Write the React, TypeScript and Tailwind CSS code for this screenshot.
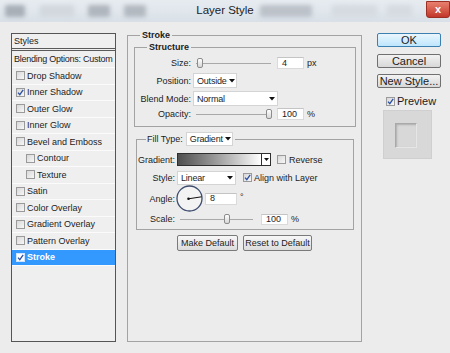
import clsx from 'clsx'

function Check({ checked, className }: { checked?: boolean; className?: string }) {
  return (
    <span
      className={clsx(
        'flex h-[9px] w-[9px] shrink-0 items-center justify-center border border-[#9a9a9a] bg-gradient-to-br from-[#d8d8d8] to-[#f7f7f7]',
        className
      )}
    >
      {checked && (
        <svg width="7" height="7" viewBox="0 0 7 7">
          <path d="M1 3.6 L2.8 5.6 L6.2 0.8" fill="none" stroke="#2b4fa3" strokeWidth="1.3" />
        </svg>
      )}
    </span>
  )
}

function Arrow() {
  return (
    <svg width="6" height="4" viewBox="0 0 6 4" className="shrink-0">
      <path d="M0 0 H6 L3 3.5 Z" fill="#111" />
    </svg>
  )
}

function Select({ value, className }: { value: string; className: string }) {
  return (
    <div
      className={clsx(
        'flex items-center justify-between gap-[2px] border border-[#d4d4d4] bg-white pl-[3px] pr-[2px]',
        className
      )}
    >
      <span className="whitespace-nowrap tracking-[-0.2px]">{value}</span>
      <Arrow />
    </div>
  )
}

function Field({ value, className }: { value: string; className: string }) {
  return (
    <div
      className={clsx(
        'flex items-center border border-[#dadada] border-t-[#c4c4c4] bg-white pl-[4px] leading-none',
        className
      )}
    >
      {value}
    </div>
  )
}

function Slider({ className, thumb }: { className: string; thumb: string }) {
  return (
    <div className={clsx('relative h-[12px]', className)}>
      <div className="absolute left-[3px] right-[2px] top-[6px] h-[2px] border-t border-[#a9a9a9] border-b-white" />
      <div
        className={clsx(
          'absolute top-[1px] h-[10px] w-[6px] rounded-[2px] border border-[#8c8c8c] bg-gradient-to-b from-white to-[#d6d6d6]',
          thumb
        )}
      />
    </div>
  )
}

function StyleRow({
  label,
  checked,
  indent,
  selected,
}: {
  label: string
  checked?: boolean
  indent?: boolean
  selected?: boolean
}) {
  return (
    <div
      className={clsx(
        'flex h-[16.5px] items-center border-b border-[#fbfbfb]',
        indent ? 'pl-[14px]' : 'pl-[4px]',
        selected && 'bg-[#3399ff] font-bold text-white'
      )}
    >
      <Check checked={checked} className={selected ? 'border-[#cfe4ff] from-white to-white' : ''} />
      <span className="ml-[2px]">{label}</span>
    </div>
  )
}

function Blob({ className }: { className: string }) {
  return <div className={clsx('h-[12px] rounded-[2px] blur-[2px]', className)} />
}

export default function App() {
  return (
    <div className="flex h-[353px] w-[450px] flex-col overflow-hidden bg-[#ececec] font-['Liberation_Sans',Arial,sans-serif] text-[9px] leading-[10px] text-[#1c1c1c]">
      {/* title bar */}
      <div className="grid h-[22px] shrink-0 grid-cols-[1fr_auto_1fr] items-center bg-gradient-to-b from-[#e7ecf1] to-[#d9e0e7]">
        <div className="flex items-center">
          <Blob className="ml-[5px] w-[20px] bg-[#a8afb7]" />
          <Blob className="ml-[15px] w-[34px] bg-[#d2d8de]" />
          <Blob className="ml-[14px] w-[22px] bg-[#b0b6bd]" />
          <Blob className="ml-[14px] w-[22px] bg-[#b3b9c0]" />
        </div>
        <div className="text-[11.5px] leading-none text-[#222]">Layer Style</div>
        <div className="flex items-center">
          <Blob className="ml-[6px] w-[52px] bg-[#bcc2c9]" />
          <Blob className="ml-[20px] w-[45px] bg-[#d5dbe1]" />
          <Blob className="ml-[10px] w-[25px] bg-[#d5dbe1]" />
          <div className="ml-auto mb-[3px] flex h-[17px] w-[24px] items-center justify-center self-start rounded-b-[3px] border border-[#9c2f25] bg-gradient-to-b from-[#e8806f] to-[#c2352a] text-[11px] font-bold leading-none text-white">
            x
          </div>
        </div>
      </div>

      {/* body */}
      <div className="flex items-start">
        {/* styles list */}
        <div className="ml-[11px] mt-[11px] h-[309px] w-[105px] border border-[#555] bg-[#efefef]">
          <div className="flex h-[17px] items-center border-b-[3px] border-double border-[#5a5a5a] pl-[2px]">
            Styles
          </div>
          <div className="flex h-[17px] items-center whitespace-nowrap border-b border-[#fbfbfb] pl-[2px] tracking-[-0.25px]">
            Blending Options: Custom
          </div>
          <StyleRow label="Drop Shadow" />
          <StyleRow label="Inner Shadow" checked />
          <StyleRow label="Outer Glow" />
          <StyleRow label="Inner Glow" />
          <StyleRow label="Bevel and Emboss" />
          <StyleRow label="Contour" indent />
          <StyleRow label="Texture" indent />
          <StyleRow label="Satin" />
          <StyleRow label="Color Overlay" />
          <StyleRow label="Gradient Overlay" />
          <StyleRow label="Pattern Overlay" />
          <StyleRow label="Stroke" checked selected />
        </div>

        {/* stroke group */}
        <fieldset className="ml-[11px] mt-[8px] h-[312px] w-[235px] border border-[#a3a3a3]">
          <legend className="ml-[12px] px-[2px] font-bold">Stroke</legend>

          <fieldset className="ml-[6px] mt-[2px] w-[222px] border border-[#a3a3a3] pb-[5px]">
            <legend className="ml-[12px] px-[2px] font-bold">Structure</legend>
            <div className="mt-[4px] flex h-[14px] items-center">
              <span className="w-[56px] text-right">Size:</span>
              <Slider className="ml-[2px] w-[80px]" thumb="left-[4px]" />
              <Field value="4" className="ml-[4px] h-[12px] w-[27px]" />
              <span className="ml-[3px]">px</span>
            </div>
            <div className="mt-[3px] flex h-[15px] items-center">
              <span className="w-[56px] text-right">Position:</span>
              <Select value="Outside" className="ml-[2px] h-[15px] w-[44px]" />
            </div>
            <div className="mt-[3px] flex h-[15px] items-center">
              <span className="w-[56px] text-right">Blend Mode:</span>
              <Select value="Normal" className="ml-[2px] h-[15px] w-[85px]" />
            </div>
            <div className="mt-[1px] flex h-[14px] items-center">
              <span className="w-[56px] text-right">Opacity:</span>
              <Slider className="ml-[2px] w-[80px]" thumb="left-[73px]" />
              <Field value="100" className="ml-[4px] h-[12px] w-[27px]" />
              <span className="ml-[3px]">%</span>
            </div>
          </fieldset>

          <fieldset className="ml-[8px] mt-[5px] w-[218px] border border-[#a3a3a3] pb-[4px]">
            <legend className="ml-[9px] flex items-center pl-[1px] pr-[2px]">
              <span>Fill Type:</span>
              <Select value="Gradient" className="ml-[3px] h-[14px] w-[47px]" />
            </legend>
            <div className="mt-[7px] flex h-[13px] items-center">
              <span className="w-[38px] text-right">Gradient:</span>
              <div className="ml-[2px] flex h-[13px] w-[94px] border border-[#2e2e2e]">
                <div className="flex-1 bg-gradient-to-r from-[#4f4f4f] to-white" />
                <div className="flex w-[9px] items-center justify-center border-l border-[#2e2e2e] bg-white">
                  <svg width="5" height="3" viewBox="0 0 5 3">
                    <path d="M0 0 H5 L2.5 3 Z" fill="#111" />
                  </svg>
                </div>
              </div>
              <Check className="ml-[6px]" />
              <span className="ml-[3px]">Reverse</span>
            </div>
            <div className="mt-[5px] flex h-[13px] items-center">
              <span className="w-[38px] text-right">Style:</span>
              <Select value="Linear" className="ml-[2px] h-[14px] w-[59px]" />
              <Check checked className="ml-[7px]" />
              <span className="ml-[2px]">Align with Layer</span>
            </div>
            <div className="mt-[1px] flex h-[27px] items-center">
              <span className="w-[38px] text-right">Angle:</span>
              <svg width="27" height="27" viewBox="0 0 27 27" className="ml-[1px]">
                <circle cx="13.5" cy="13.5" r="12.5" fill="#f3f3f3" stroke="#3d4b6e" strokeWidth="1.3" />
                <line x1="12.5" y1="13.8" x2="25.5" y2="11.8" stroke="#111" strokeWidth="1" />
                <circle cx="12.5" cy="13.8" r="1.3" fill="#111" />
              </svg>
              <Field value="8" className="ml-[2px] h-[12px] w-[32px]" />
              <span className="ml-[3px] self-start pt-[8px] leading-none">°</span>
            </div>
            <div className="mt-[1px] flex h-[12px] items-center">
              <span className="w-[38px] text-right">Scale:</span>
              <Slider className="ml-[2px] w-[78px]" thumb="left-[47px]" />
              <Field value="100" className="ml-[6px] h-[11px] w-[27px]" />
              <span className="ml-[3px]">%</span>
            </div>
          </fieldset>

          <div className="mt-[5px] flex justify-center gap-[5px]">
            <button className="h-[16px] w-[61px] rounded-[2px] border border-[#7a7a7a] bg-gradient-to-b from-[#f7f7f7] to-[#dcdcdc] text-[9px]">
              Make Default
            </button>
            <button className="h-[16px] w-[69px] rounded-[2px] border border-[#7a7a7a] bg-gradient-to-b from-[#f7f7f7] to-[#dcdcdc] text-[9px]">
              Reset to Default
            </button>
          </div>
        </fieldset>

        {/* buttons */}
        <div className="ml-[15px] mt-[11px] flex w-[64px] flex-col text-[11px] leading-none">
          <button className="h-[14px] rounded-[2px] border border-[#3c7fb1] bg-gradient-to-b from-[#eaf6fd] to-[#bee6fd]">
            OK
          </button>
          <button className="mt-[7px] h-[14px] rounded-[2px] border border-[#707070] bg-gradient-to-b from-[#f2f2f2] to-[#d8d8d8]">
            Cancel
          </button>
          <button className="mt-[6px] h-[14px] rounded-[2px] border border-[#707070] bg-gradient-to-b from-[#f2f2f2] to-[#d8d8d8]">
            New Style...
          </button>
          <div className="mt-[8px] flex h-[10px] items-center pl-[9px]">
            <Check checked />
            <span className="ml-[2px]">Preview</span>
          </div>
          <div className="ml-[6px] mt-[4px] flex h-[49px] w-[49px] items-start border border-[#cfcfcf] bg-[#d8d8d8]">
            <div className="ml-[11px] mt-[12px] h-[25px] w-[22px] border border-[#a9a9a9] border-b-[#e6e6e6] border-r-[#e6e6e6] shadow-[inset_1px_1px_2px_rgba(0,0,0,0.2)]" />
          </div>
        </div>
      </div>
    </div>
  )
}
